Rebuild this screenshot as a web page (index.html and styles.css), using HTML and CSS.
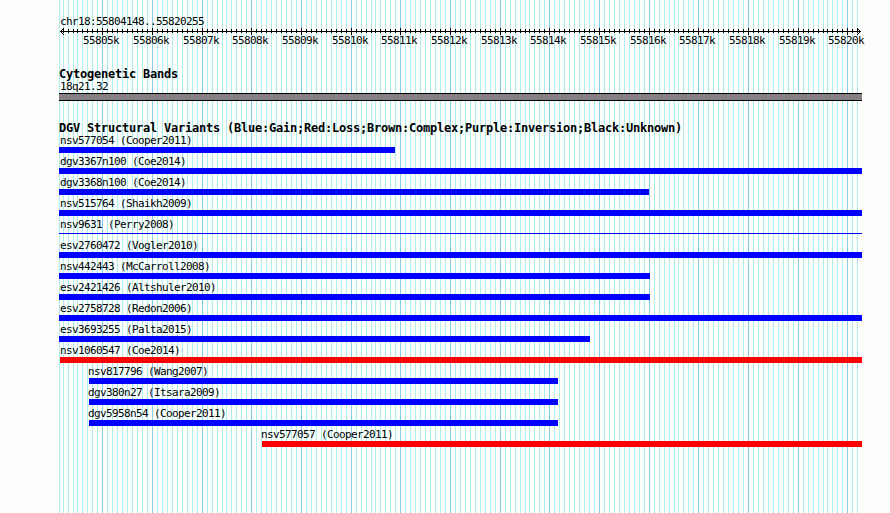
FILE: index.html
```
<!DOCTYPE html>
<html lang="en">

<head>
    <meta charset="UTF-8">
    <meta name="viewport" content="width=device-width, initial-scale=1.0">
    <title>chr18:55804148..55820255</title>
    <link rel="stylesheet" href="styles.css">
</head>

<body>
    <div class="browser">
        <svg class="grid" id="grid" width="890" height="513"></svg>
        <div class="panel">
            <div class="region">chr18:55804148..55820255</div>
            <svg class="ruler" id="ruler" width="831" height="20"></svg>
            <h2 class="title bands">Cytogenetic Bands</h2>
            <div class="label">18q21.32</div>
            <div class="band"></div>
            <h2 class="title variants">DGV Structural Variants (Blue:Gain;Red:Loss;Brown:Complex;Purple:Inversion;Black:Unknown)</h2>
            <div id="tracks"></div>
        </div>
    </div>

    <script src="script.js"></script>
</body>

</html>
```
FILE: styles.css
```
body {
    margin: 0;
    background-color: #fdfefc;
    color: #000;
    font-family: 'DejaVu Sans Mono', 'Liberation Mono', monospace;
    font-size: 11px;
    letter-spacing: -0.622px;
}

.browser {
    display: grid;
    width: 890px;
    height: 513px;
    overflow: hidden;
}

.grid,
.panel {
    grid-area: 1 / 1;
}

.grid,
.ruler {
    display: block;
    shape-rendering: crispEdges;
}

.minor {
    fill: #afeeee;
}

.major {
    fill: #87ceeb;
}

.panel {
    padding: 16px 0 0 59px;
}

.region,
.label {
    height: 12px;
    line-height: 12px;
    padding-left: 1px;
    white-space: pre;
}

.region {
    height: 11px;
}

.ruler {
    overflow: visible;
}

.title {
    margin: 0;
    height: 13px;
    line-height: 13px;
    font-size: 12px;
    font-weight: bold;
    letter-spacing: -0.224px;
    white-space: pre;
}

.bands {
    margin-top: 21px;
}

.band {
    box-sizing: border-box;
    width: 803px;
    height: 8px;
    border-top: 1px solid #000;
    border-bottom: 1px solid #000;
    background-color: #848084;
}

.variants {
    margin-top: 21px;
}

.track {
    height: 21px;
}

/* labels of indented features start a pixel left of their bar */
.shifted {
    padding-left: 0;
    margin-left: -1px;
}

.bar {
    height: 6px;
}

.gain {
    background-color: #0000ff;
}

.loss {
    background-color: #ff0000;
}

.thin {
    height: 1px;
    margin-top: 2px;
}
```
FILE: script.js
```
// name, left, right, type
const variants = [
    ['nsv577054 (Cooper2011)', 0, 336, 'gain'],
    ['dgv3367n100 (Coe2014)', 0, 803, 'gain'],
    ['dgv3368n100 (Coe2014)', 0, 590, 'gain'],
    ['nsv515764 (Shaikh2009)', 0, 803, 'gain'],
    ['nsv9631 (Perry2008)', 0, 803, 'gain thin'],
    ['esv2760472 (Vogler2010)', 0, 803, 'gain'],
    ['nsv442443 (McCarroll2008)', 0, 591, 'gain'],
    ['esv2421426 (Altshuler2010)', 0, 591, 'gain'],
    ['esv2758728 (Redon2006)', 0, 803, 'gain'],
    ['esv3693255 (Palta2015)', 0, 531, 'gain'],
    ['nsv1060547 (Coe2014)', 1, 803, 'loss'],
    ['nsv817796 (Wang2007)', 30, 499, 'gain'],
    ['dgv380n27 (Itsara2009)', 30, 499, 'gain'],
    ['dgv5958n54 (Cooper2011)', 30, 499, 'gain'],
    ['nsv577057 (Cooper2011)', 203, 803, 'loss']
];

const left = 59;
const step = 4.967; // pixels per 100 bases
const tickX = (i) => Math.round(102.31 + i * step);

let minor = `<rect class="minor" x="${left}" y="0" width="1" height="513"/>`;
let major = '';
let ticks = '';
let labels = '';

for (let i = -8; i <= 152; i++) {
    const x = tickX(i);
    const isMajor = i % 10 === 0;
    if (isMajor) {
        major += `<rect class="major" x="${x}" y="0" width="1" height="513"/>`;
        labels += `<text x="${x - left - 19}" y="17">${55805 + i / 10}k</text>`;
        ticks += `<rect x="${x - left}" y="1" width="1" height="7"/>`;
    } else {
        minor += `<rect class="minor" x="${x}" y="0" width="1" height="513"/>`;
        ticks += `<rect x="${x - left}" y="2" width="1" height="4"/>`;
    }
}

// arrow heads, one pixel per step away from the axis
let heads = '';
for (let d = 1; d <= 3; d++) {
    for (const y of [4 - d, 4 + d]) {
        heads += `<rect x="${1 + d}" y="${y}" width="1" height="1"/>`;
        heads += `<rect x="${801 - d}" y="${y}" width="1" height="1"/>`;
    }
}

document.getElementById('grid').innerHTML = minor + major;
document.getElementById('ruler').innerHTML =
    '<rect x="1" y="4" width="801" height="1"/>' + heads + ticks + labels;

document.getElementById('tracks').innerHTML = variants.map(([name, start, end, type]) => `
    <div class="track" style="padding-left: ${start}px">
        <div class="label ${start > 1 ? 'shifted' : ''}"${start === 1 ? ' style="padding-left: 0"' : ''}>${name}</div>
        <div class="bar ${type}" style="width: ${end - start}px"></div>
    </div>`).join('');
```
